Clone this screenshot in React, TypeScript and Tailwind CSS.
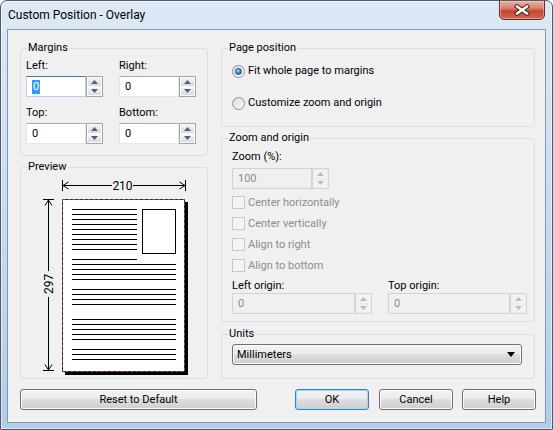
import React from "react";

function Arrow({ up, color }: { up: boolean; color: string }) {
  return (
    <svg width="7" height="4" viewBox="0 0 7 4">
      <path d={up ? "M0 4 L3.5 0 L7 4 Z" : "M0 0 L7 0 L3.5 4 Z"} fill={color} />
    </svg>
  );
}

function Spin({ disabled }: { disabled?: boolean }) {
  const c = disabled ? "#bcbcbc" : "#4d6185";
  const btn = disabled
    ? "flex-1 flex items-center justify-center border border-[#ececec] bg-[#f3f3f3]"
    : "flex-1 flex items-center justify-center border border-[#fbfbfb] bg-linear-to-b from-[#f4f4f4] to-[#dadada]";
  return (
    <div
      className={
        disabled
          ? "flex flex-col w-[17px] h-full border border-[#d6d6d6]"
          : "flex flex-col w-[17px] h-full border border-[#a5a5a5]"
      }
    >
      <div className={btn}>
        <Arrow up color={c} />
      </div>
      <div className={btn}>
        <Arrow up={false} color={c} />
      </div>
    </div>
  );
}

function SpinBox({
  value,
  className,
  focused,
  disabled,
}: {
  value: string;
  className: string;
  focused?: boolean;
  disabled?: boolean;
}) {
  const box = focused
    ? "flex-1 flex items-center pl-[5px] bg-white border border-[#b7d4ee] border-t-[#3d7bad]"
    : disabled
    ? "flex-1 flex items-center pl-[5px] bg-[#f0f0f0] border border-[#d2d2d2] text-[#8d8d8d]"
    : "flex-1 flex items-center pl-[5px] bg-white border border-[#e3e9ef] border-t-[#abadb3] border-l-[#e2e3ea]";
  return (
    <div className={"flex h-[21px] " + className}>
      <div className={box}>
        {focused ? (
          <span className="bg-[#3399ff] text-white px-[1px]">{value}</span>
        ) : (
          <span>{value}</span>
        )}
      </div>
      <Spin disabled={disabled} />
    </div>
  );
}

function Radio({ checked }: { checked?: boolean }) {
  return (
    <span className="w-[13px] h-[13px] rounded-full border border-[#8e8f8f] bg-linear-to-br from-[#d9d9d9] to-[#fbfbfb] flex items-center justify-center shrink-0">
      {checked && (
        <span className="w-[7px] h-[7px] rounded-full border border-[#1b4f80] bg-[radial-gradient(circle_at_40%_35%,#9be6ff_0%,#2b8fd4_50%,#0c3f74_100%)]" />
      )}
    </span>
  );
}

function Check({ label }: { label: string }) {
  return (
    <div className="flex items-center h-[21px] gap-[3px] text-[#8d8d8d]">
      <span className="w-[13px] h-[13px] border border-[#c8c8c8] bg-[#f4f4f4] shrink-0" />
      <span>{label}</span>
    </div>
  );
}

const btnBase =
  "h-[21px] rounded-[3px] border flex items-center justify-center text-black bg-[linear-gradient(#f2f2f2_0%,#ebebeb_50%,#dddddd_50%,#cfcfcf_100%)]";

function Preview() {
  const shortY = [33, 38, 43, 48, 53, 58, 63, 68, 73, 83];
  const longY = [88, 93, 98, 103, 113, 118, 123, 128, 143, 148, 153, 158, 163, 173, 178, 183];
  return (
    <svg width="152" height="200" viewBox="0 0 152 200" className="ml-[17px] mt-[2px] block">
      <g stroke="#000" strokeWidth="1" fill="none">
        <line x1="24.5" y1="4" x2="24.5" y2="15" />
        <line x1="147.5" y1="4" x2="147.5" y2="15" />
        <line x1="24.5" y1="9.5" x2="74" y2="9.5" />
        <line x1="95" y1="9.5" x2="147.5" y2="9.5" />
        <path d="M30.5 6 L25 9.5 L30.5 13" />
        <path d="M141.5 6 L147 9.5 L141.5 13" />
        <line x1="5" y1="23.5" x2="16" y2="23.5" />
        <line x1="5" y1="194.5" x2="16" y2="194.5" />
        <line x1="10.5" y1="23.5" x2="10.5" y2="95" />
        <line x1="10.5" y1="121" x2="10.5" y2="194.5" />
        <path d="M7 29.5 L10.5 24 L14 29.5" />
        <path d="M7 188.5 L10.5 194 L14 188.5" />
      </g>
      <text
        x="84.5"
        y="13.5"
        textAnchor="middle"
        fontSize="12"
        fontFamily="Roboto, 'Liberation Sans', sans-serif"
        fill="#000"
      >
        210
      </text>
      <text
        x="0"
        y="0"
        textAnchor="middle"
        fontSize="12"
        fontFamily="Roboto, 'Liberation Sans', sans-serif"
        fill="#000"
        transform="translate(14.8 108) rotate(-90)"
      >
        297
      </text>
      <rect x="27" y="26" width="123" height="173" fill="#000" />
      <rect x="24.5" y="23.5" width="122" height="172" fill="#fff" stroke="#0a0a78" strokeWidth="1" />
      <rect
        x="24.5"
        y="23.5"
        width="122"
        height="172"
        fill="none"
        stroke="#9a5d0e"
        strokeWidth="1"
        strokeDasharray="3 2"
      />
      <rect x="104.5" y="33.5" width="33" height="44" fill="#fff" stroke="#000" strokeWidth="1" />
      <g stroke="#000" strokeWidth="1">
        {shortY.map((y) => (
          <line key={"s" + y} x1="34" y1={y + 0.5} x2="99" y2={y + 0.5} />
        ))}
        {longY.map((y) => (
          <line key={"l" + y} x1="34" y1={y + 0.5} x2="138" y2={y + 0.5} />
        ))}
      </g>
    </svg>
  );
}

export default function App() {
  return (
    <div className="w-[553px] h-[430px] flex flex-col rounded-t-[7px] border border-[#4f5b69] bg-linear-to-b from-[#dde9f6] via-[#c8dbf0] to-[#b4cce9] shadow-[inset_0_0_0_1px_rgba(255,255,255,0.55)] font-['Roboto','Liberation_Sans',sans-serif] text-[11px] leading-[14px] text-black overflow-hidden">
      <div className="h-[28px] flex items-start justify-between shrink-0">
        <div className="pl-[7px] pt-[7px] text-[12px] leading-[15px] text-black">
          Custom Position - Overlay
        </div>
        <button className="w-[46px] h-[20px] mr-[7px] -mt-[1px] rounded-b-[5px] border border-[#6a2b22] bg-[linear-gradient(#ecb2a3_0%,#d9806e_40%,#c4452f_55%,#cf6a50_100%)] shadow-[inset_0_0_0_1px_rgba(255,220,210,0.45)] flex items-center justify-center">
          <svg width="16" height="12" viewBox="0 0 16 12">
            <path d="M3 2.5 L13 9.5 M13 2.5 L3 9.5" stroke="#4a1f1a" strokeWidth="4.4" strokeLinecap="square" />
            <path d="M3 2.5 L13 9.5 M13 2.5 L3 9.5" stroke="#ffffff" strokeWidth="2.4" strokeLinecap="square" />
          </svg>
        </button>
      </div>

      <div className="mx-[6px] h-[394px] shrink-0 border border-[#8497b0] bg-[#f0f0f0] flex flex-col pl-[12px] pr-[9px] pt-[11px]">
        <div className="flex gap-[13px]">
          <div className="w-[188px] flex flex-col">
            <fieldset className="h-[115px] border border-[#d5dfe5] rounded-[3px] min-w-0">
              <legend className="ml-[6px] px-[1px] leading-[14px]">Margins</legend>
              <div className="pl-[5px] pt-[4px] grid grid-cols-[77px_77px] gap-x-[16px]">
                <div>Left:</div>
                <div>Right:</div>
                <SpinBox value="0" className="mt-[3px]" focused />
                <SpinBox value="0" className="mt-[3px]" />
                <div className="mt-[9px]">Top:</div>
                <div className="mt-[9px]">Bottom:</div>
                <SpinBox value="0" className="mt-[3px]" />
                <SpinBox value="0" className="mt-[3px]" />
              </div>
            </fieldset>
            <fieldset className="mt-[4px] h-[219px] border border-[#d5dfe5] rounded-[3px] min-w-0">
              <legend className="ml-[6px] px-[1px] leading-[14px]">Preview</legend>
              <Preview />
            </fieldset>
          </div>

          <div className="w-[314px] flex flex-col">
            <fieldset className="h-[86px] border border-[#d5dfe5] rounded-[3px] min-w-0">
              <legend className="ml-[6px] px-[1px] leading-[14px]">Page position</legend>
              <div className="pl-[10px] flex flex-col">
                <div className="mt-[9px] h-[14px] flex items-center gap-[3px]">
                  <Radio checked />
                  <span>Fit whole page to margins</span>
                </div>
                <div className="mt-[18px] h-[14px] flex items-center gap-[3px]">
                  <Radio />
                  <span>Customize zoom and origin</span>
                </div>
              </div>
            </fieldset>

            <fieldset className="mt-[4px] h-[191px] border border-[#d5dfe5] rounded-[3px] min-w-0">
              <legend className="ml-[6px] px-[1px] leading-[14px]">Zoom and origin</legend>
              <div className="pl-[10px] flex flex-col">
                <div className="mt-[5px]">Zoom (%):</div>
                <SpinBox value="100" className="mt-[4px] w-[97px]" disabled />
                <div className="mt-[3px] flex flex-col">
                  <Check label="Center horizontally" />
                  <Check label="Center vertically" />
                  <Check label="Align to right" />
                  <Check label="Align to bottom" />
                </div>
                <div className="mt-[3px] grid grid-cols-[140px_139px] gap-x-[16px]">
                  <div>Left origin:</div>
                  <div>Top origin:</div>
                  <SpinBox value="0" className="" disabled />
                  <SpinBox value="0" className="" disabled />
                </div>
              </div>
            </fieldset>

            <fieldset className="mt-[5px] h-[52px] border border-[#d5dfe5] rounded-[3px] min-w-0">
              <legend className="ml-[6px] px-[1px] leading-[14px]">Units</legend>
              <div className="pl-[10px]">
                <div className="mt-[3px] w-[290px] h-[21px] rounded-[3px] border border-[#707070] bg-[linear-gradient(#f2f2f2_0%,#ebebeb_50%,#dddddd_50%,#cfcfcf_100%)] shadow-[inset_0_0_0_1px_#fbfbfb] flex items-center justify-between pl-[4px] pr-[6px]">
                  <span>Millimeters</span>
                  <svg width="8" height="5" viewBox="0 0 8 5">
                    <path d="M0 0 L8 0 L4 5 Z" fill="#000" />
                  </svg>
                </div>
              </div>
            </fieldset>
          </div>
        </div>

        <div className="mt-[10px] flex justify-between">
          <button className={btnBase + " w-[237px] border-[#707070] shadow-[inset_0_0_0_1px_#fbfbfb]"}>
            Reset to Default
          </button>
          <div className="flex">
            <button className={btnBase + " w-[74px] border-[#3c7fb1] shadow-[inset_0_0_0_1px_#9bdaf8]"}>
              OK
            </button>
            <button className={btnBase + " ml-[10px] w-[74px] border-[#707070] shadow-[inset_0_0_0_1px_#fbfbfb]"}>
              Cancel
            </button>
            <button className={btnBase + " ml-[9px] w-[74px] border-[#707070] shadow-[inset_0_0_0_1px_#fbfbfb]"}>
              Help
            </button>
          </div>
        </div>
      </div>
    </div>
  );
}
